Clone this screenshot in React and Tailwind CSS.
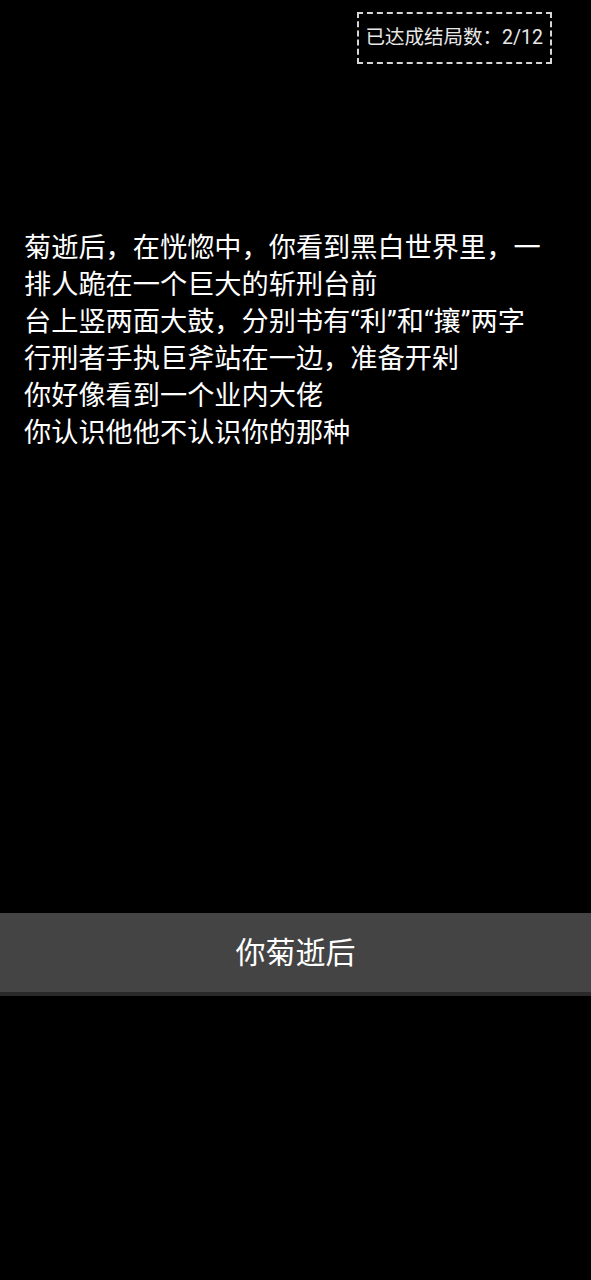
const lines = [
  "菊逝后，在恍惚中，你看到黑白世界里，一排人跪在一个巨大的斩刑台前",
  "台上竖两面大鼓，分别书有“利”和“攘”两字",
  "行刑者手执巨斧站在一边，准备开剁",
  "你好像看到一个业内大佬",
  "你认识他他不认识你的那种",
];

const App = () => {
  return (
    <div
      className="w-full min-h-[1280px] bg-black flex flex-col"
      style={{ fontFamily: '"Roboto", "Noto Sans CJK SC", sans-serif' }}
    >
      {/* ending counter */}
      <div className="flex justify-end pt-3 pr-[39px]">
        <div className="h-[52px] px-[7px] flex items-center border-2 border-dashed border-[#d6d6d6] text-[19.5px] text-[#e8e8e8]">
          已达成结局数：2/12
        </div>
      </div>

      {/* story text */}
      <div className="mt-[166px] pl-6 w-[550px] text-[27.2px] leading-[37px] text-white">
        {lines.map((line, i) => (
          <p key={i}>{line}</p>
        ))}
      </div>

      {/* choice */}
      <button className="mt-[461px] w-full h-[83px] bg-[#444444] border-b-4 border-[#2a2a2a] text-[30px] text-white flex items-center justify-center">
        你菊逝后
      </button>
    </div>
  );
};

export default App;
